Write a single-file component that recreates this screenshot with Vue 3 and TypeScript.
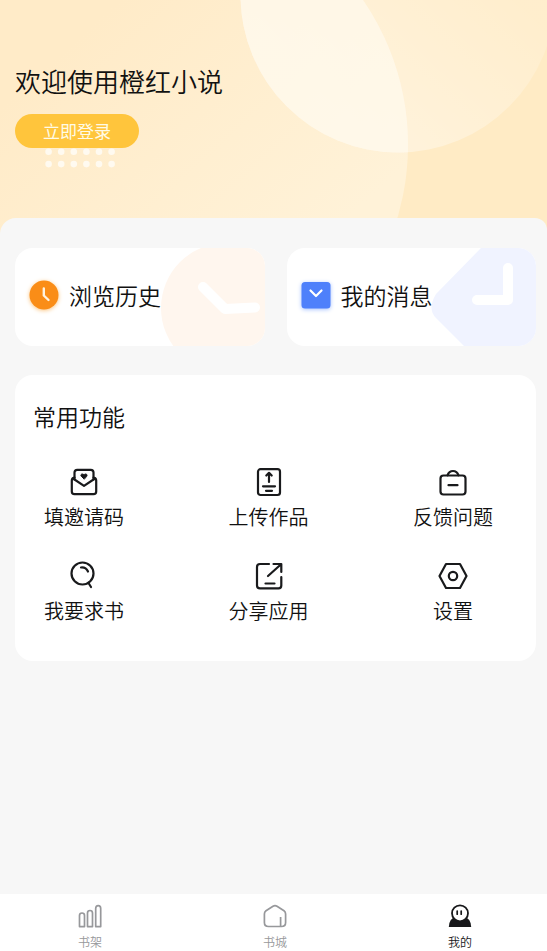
<script setup lang="ts">
import { ref } from 'vue'

type FeatureIcon = 'invite' | 'upload' | 'feedback' | 'search' | 'share' | 'settings'
type TabIcon = 'shelf' | 'city' | 'mine'

const features: { label: string; icon: FeatureIcon }[] = [
  { label: '填邀请码', icon: 'invite' },
  { label: '上传作品', icon: 'upload' },
  { label: '反馈问题', icon: 'feedback' },
  { label: '我要求书', icon: 'search' },
  { label: '分享应用', icon: 'share' },
  { label: '设置', icon: 'settings' },
]

const tabs: { label: string; icon: TabIcon }[] = [
  { label: '书架', icon: 'shelf' },
  { label: '书城', icon: 'city' },
  { label: '我的', icon: 'mine' },
]

const active = ref<TabIcon>('mine')
</script>

<template>
  <div class="page">
    <header class="hero">
      <svg class="hero-art" viewBox="0 0 547 234" preserveAspectRatio="xMidYMin slice" aria-hidden="true">
        <defs>
          <linearGradient id="big" gradientUnits="userSpaceOnUse" x1="120" y1="0" x2="330" y2="234">
            <stop offset="0" stop-color="#ffebc8" />
            <stop offset="1" stop-color="#fff2d8" />
          </linearGradient>
          <linearGradient id="top" gradientUnits="userSpaceOnUse" x1="520" y1="0" x2="380" y2="150">
            <stop offset="0" stop-color="#fff" stop-opacity="0.14" />
            <stop offset="1" stop-color="#fff" stop-opacity="0.4" />
          </linearGradient>
          <clipPath id="bigClip"><circle cx="152" cy="145" r="256" /></clipPath>
        </defs>
        <rect width="547" height="234" fill="#ffebc5" />
        <circle cx="152" cy="145" r="256" fill="url(#big)" />
        <circle cx="398" cy="-5" r="157.5" fill="url(#top)" />
        <circle cx="398" cy="-5" r="157.5" fill="#fff8ea" fill-opacity="0.75" clip-path="url(#bigClip)" />
        <g fill="#fffaf0">
          <template v-for="row in 2" :key="row">
            <circle v-for="col in 6" :key="col" :cx="36 + col * 12.6" :cy="139.5 + row * 12.3" r="3.3" />
          </template>
        </g>
      </svg>
      <h1 class="welcome">欢迎使用橙红小说</h1>
      <button class="login" type="button">立即登录</button>
    </header>

    <main class="panel">
      <div class="shortcuts">
        <a class="shortcut" href="#history">
          <svg class="shortcut-art" viewBox="0 0 105 98" aria-hidden="true">
            <circle cx="66" cy="60" r="65" fill="#fff6ee" />
            <path d="M43 39L65 61L95 59.500" fill="none" stroke="#fff" stroke-width="10" stroke-linecap="round" stroke-linejoin="round" />
          </svg>
          <svg class="badge orange" viewBox="0 0 30 30" aria-hidden="true">
            <circle cx="15" cy="15" r="14.500" fill="#fa8d17" />
            <path d="M14.800 8.500V15.500L19.500 20" fill="none" stroke="#fff3df" stroke-width="2.400" stroke-linecap="round" stroke-linejoin="round" />
          </svg>
          <span>浏览历史</span>
        </a>
        <a class="shortcut" href="#messages">
          <svg class="shortcut-art" viewBox="0 0 105 98" aria-hidden="true">
            <path d="M50 0H105V98H33L5 70Q-4 61 5 46Z" fill="#f0f3ff" />
            <path d="M77 20V52H46" fill="none" stroke="#fff" stroke-width="10" stroke-linecap="round" stroke-linejoin="round" />
          </svg>
          <svg class="badge blue" viewBox="0 0 30 30" aria-hidden="true">
            <rect x="0.500" y="2" width="29" height="26.500" rx="3.500" fill="#4e80fb" />
            <path d="M9.500 10.500L15 16L20.500 10.500" fill="none" stroke="#fff" stroke-width="2.200" stroke-linecap="round" stroke-linejoin="round" />
          </svg>
          <span>我的消息</span>
        </a>
      </div>

      <section class="features">
        <h2>常用功能</h2>
        <div class="feature-grid">
          <button v-for="f in features" :key="f.icon" class="feature" type="button">
            <svg viewBox="0 0 30 30" fill="none" stroke="#191a1c" stroke-width="2.200" stroke-linecap="round" stroke-linejoin="round" aria-hidden="true">
              <template v-if="f.icon === 'invite'">
                <path d="M5.500 12.500V5.500Q5.500 2.800 8.200 2.800H21.800Q24.500 2.800 24.500 5.500V12.500" />
                <path d="M5.500 10.500Q2.800 11 2.800 13.500V24.500Q2.800 27.200 5.500 27.200H24.500Q27.200 27.200 27.200 24.500V13.500Q27.200 11 24.500 10.500" />
                <path d="M4 11.500L15 18.800L26 11.500" />
                <path d="M15 12L12.200 9.200C11 7.500 13.300 6 15 7.800C16.700 6 19 7.500 17.800 9.200Z" fill="#191a1c" stroke-width="1" />
              </template>
              <template v-else-if="f.icon === 'upload'">
                <rect x="4" y="2.200" width="22" height="25.800" rx="2.500" />
                <path d="M15 15V6M12.300 8.500L15 5.800L17.700 8.500M9 19.300H21M12 23.800H18" />
              </template>
              <template v-else-if="f.icon === 'feedback'">
                <rect x="2.500" y="8.500" width="25" height="19" rx="3" />
                <path d="M9.500 8.300Q11 4 15 4Q19 4 20.500 8.300M10.500 18.200H19.500" />
              </template>
              <template v-else-if="f.icon === 'search'">
                <circle cx="13.500" cy="12.500" r="11" />
                <path d="M12 6.500Q17 6 19 10.500M19.500 22L22 26" />
              </template>
              <template v-else-if="f.icon === 'share'">
                <path d="M15 3H6Q3 3 3 6V24.500Q3 27.300 6 27.300H24.500Q27.300 27.300 27.300 24.500V16" />
                <path d="M14 15L26.500 3.800M19.500 3H27.300V11M11.500 22.500H20.500" />
              </template>
              <template v-else>
                <path d="M8 3H22L28.500 15L22 27H8L1.500 15Z" />
                <circle cx="15" cy="15" r="4.200" />
              </template>
            </svg>
            <span>{{ f.label }}</span>
          </button>
        </div>
      </section>
    </main>

    <nav class="tabs">
      <button
        v-for="t in tabs"
        :key="t.icon"
        type="button"
        class="tab"
        :class="{ active: active === t.icon }"
        @click="active = t.icon"
      >
        <svg viewBox="0 0 24 24" fill="none" stroke="currentColor" stroke-width="1.700" stroke-linejoin="round" aria-hidden="true">
          <template v-if="t.icon === 'shelf'">
            <path d="M1.500 22.600V11.500Q1.500 9 4 9Q6.500 9 6.500 11.500V22.600Z" />
            <path d="M9.500 22.600V9Q9.500 6.500 12 6.500Q14.500 6.500 14.500 9V22.600Z" />
            <path d="M17.700 22.600V4.500Q17.700 1.700 20.200 1.700Q22.700 1.700 22.700 4.500V22.600Z" />
          </template>
          <template v-else-if="t.icon === 'city'">
            <path d="M10 2.200Q12 1 14 2.200L21 6.800Q22.600 8 22.600 10V18.500Q22.600 22.500 18.500 22.500H5.500Q1.400 22.500 1.400 18.500V10Q1.400 8 3 6.800Z" />
            <path d="M17.600 13V22" />
          </template>
          <template v-else>
            <path d="M6 13L2.800 16Q1 18.500 0.800 23H23.200Q23 18.500 21.200 16L18 13Z" fill="currentColor" stroke="none" />
            <circle cx="12" cy="9.300" r="8" fill="#fff" stroke-width="1.800" />
            <path d="M9.200 7V10.200M13.200 7V10.200" stroke-width="1.700" stroke-linecap="round" />
          </template>
        </svg>
        <span>{{ t.label }}</span>
      </button>
    </nav>
  </div>
</template>

<style>
body {
  margin: 0;
  background: #f7f7f7;
}
</style>

<style scoped>
.page {
  display: flex;
  flex-direction: column;
  min-height: 100vh;
  background: #f7f7f7;
  color: #111;
  font-family: 'Noto Sans CJK SC', 'Noto Sans', sans-serif;
  font-weight: 350;
}

button {
  margin: 0;
  padding: 0;
  border: 0;
  background: none;
  color: inherit;
  font: inherit;
  cursor: pointer;
}

a {
  color: inherit;
  text-decoration: none;
}

.hero {
  position: relative;
  display: flex;
  flex-direction: column;
  align-items: flex-start;
  gap: 13px;
  padding: 61px 15px 86px;
  overflow: hidden;
}

.hero-art {
  position: absolute;
  inset: 0;
  width: 100%;
  height: 100%;
}

.welcome {
  position: relative;
  margin: 0;
  font-size: 26px;
  font-weight: 350;
  line-height: 40px;
}

.login {
  position: relative;
  padding: 0 28px;
  border-radius: 17px;
  background: #ffc53c;
  color: #fffbe6;
  font-size: 17px;
  font-weight: 400;
  line-height: 34px;
}

.panel {
  position: relative;
  display: flex;
  flex: 1;
  flex-direction: column;
  gap: 29px;
  margin-top: -16px;
  padding: 30px 11px 30px 15px;
  border-radius: 16px 12px 0 0;
  background: #f7f7f7;
}

.shortcuts {
  display: grid;
  grid-template-columns: 1fr 1fr;
  gap: 22px;
}

.shortcut {
  position: relative;
  display: flex;
  align-items: center;
  gap: 10px;
  padding: 30px 0 34px 14px;
  border-radius: 18px;
  background: #fff;
  font-size: 23px;
  line-height: 34px;
  overflow: hidden;
}

.shortcut span {
  position: relative;
}

.shortcut-art {
  position: absolute;
  top: 0;
  right: 0;
  height: 100%;
}

.badge {
  position: relative;
  width: 30px;
  height: 30px;
  overflow: visible;
}

.orange {
  filter: drop-shadow(0 1px 2px #fbc47e);
}

.blue {
  filter: drop-shadow(0 1px 2px #a5c1ff);
}

.features {
  padding: 24px 0 36px;
  border-radius: 18px;
  background: #fff;
}

h2 {
  margin: 0 18px;
  font-size: 23px;
  font-weight: 350;
  line-height: 34px;
}

.feature-grid {
  display: grid;
  grid-template-columns: repeat(3, 80px);
  justify-content: space-between;
  row-gap: 30px;
  padding: 34px 43px 0 29px;
}

.feature {
  display: flex;
  flex-direction: column;
  align-items: center;
  gap: 6px;
  font-size: 20px;
  line-height: 28px;
  white-space: nowrap;
}

.feature svg {
  width: 30px;
  height: 30px;
}

.tabs {
  display: flex;
  justify-content: space-between;
  padding: 10px 58px 0 61px;
  background: #fff;
}

.tab {
  display: flex;
  flex-direction: column;
  align-items: center;
  gap: 4px;
  width: 58px;
  color: #97989b;
  font-size: 12px;
  line-height: 19px;
}

.tab.active {
  color: #17181a;
}

.tab svg {
  width: 24px;
  height: 24px;
}
</style>
